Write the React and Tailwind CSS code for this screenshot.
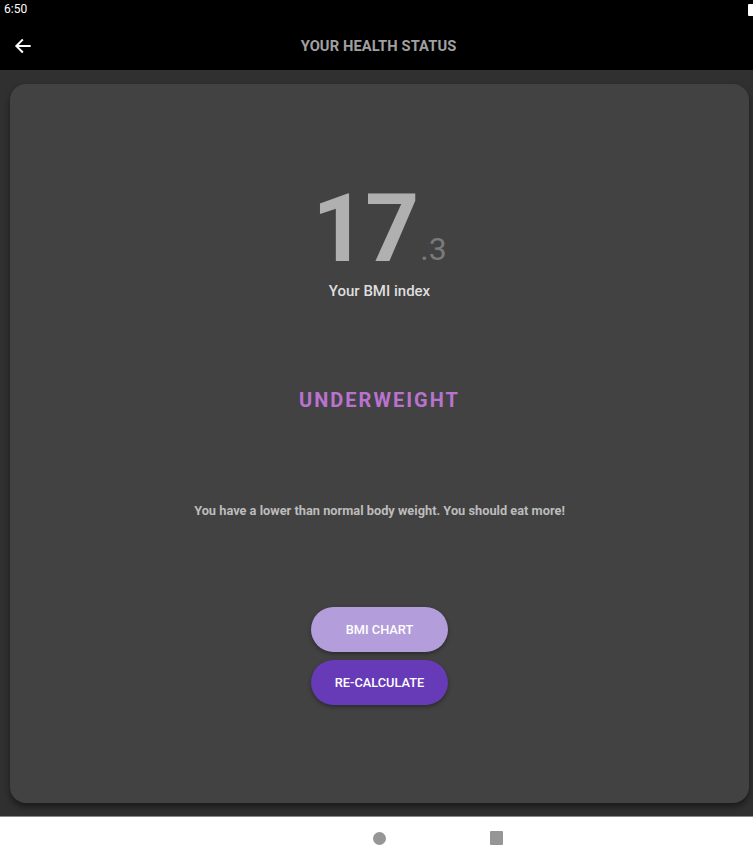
import React from "react";

export default function App() {
  return (
    <div className="w-[753px] h-[855px] flex flex-col bg-[#303030] font-['Roboto',sans-serif] overflow-hidden">
      {/* Status bar */}
      <div className="h-[22px] bg-black flex items-start justify-between pl-[4px]">
        <span className="text-white text-[12px] leading-[18px]">6:50</span>
        <div className="w-[5px] h-[12px] bg-white mt-[4px] rounded-l-[1px]" />
      </div>

      {/* App bar */}
      <div className="h-[48px] bg-black relative flex items-center justify-center">
        <button className="absolute left-[11px] top-[12px] w-[24px] h-[24px] flex items-center justify-center">
          <svg width="20" height="20" viewBox="0 0 24 24" fill="none" stroke="white" strokeWidth="2.4" strokeLinecap="square">
            <path d="M20 12H5" />
            <path d="M11 5l-7 7 7 7" strokeLinejoin="miter" />
          </svg>
        </button>
        <h1 className="ml-[4px] text-[#a0a0a0] text-[14.7px] font-bold tracking-[0.1px]">
          YOUR HEALTH STATUS
        </h1>
      </div>

      {/* Body */}
      <div className="flex-1 pl-[10px] pr-[4px] pt-[14px] pb-[13px] flex">
        <div className="flex-1 bg-[#424242] rounded-[16px] shadow-[0_4px_6px_rgba(0,0,0,0.45)] flex flex-col items-center">
          <div className="mt-[106px] flex items-end">
            <span className="text-[#b0b0b0] text-[94px] font-bold leading-[78px] tracking-[-1px]">17</span>
            <span className="text-[#7a7a7a] text-[32px] leading-[28px] ml-[2px] mb-[5px]">.3</span>
          </div>
          <p className="mt-[12px] text-[#dedede] text-[15px] font-medium">Your BMI index</p>

          <p className="mt-[82px] text-[#ba72d0] text-[20px] font-bold tracking-[2px]">UNDERWEIGHT</p>

          <p className="mt-[86px] text-[#bcbcbc] text-[12.8px] font-bold">
            You have a lower than normal body weight. You should eat more!
          </p>

          <div className="mt-[87px] flex flex-col items-center gap-[8px]">
            <button className="w-[137px] h-[45px] rounded-full bg-[#b39ddb] text-white text-[12.8px] font-medium shadow-[0_2px_4px_rgba(0,0,0,0.35)]">
              BMI CHART
            </button>
            <button className="w-[137px] h-[45px] rounded-full bg-[#673ab7] text-white text-[12.8px] font-medium shadow-[0_2px_4px_rgba(0,0,0,0.35)]">
              RE-CALCULATE
            </button>
          </div>
        </div>
      </div>

      {/* Nav bar */}
      <div className="h-[39px] bg-white border-t border-[#8a8a8a] relative">
        <div className="absolute left-[373px] top-[15px] w-[13px] h-[13px] rounded-full bg-[#969696]" />
        <div className="absolute left-[490px] top-[14px] w-[13px] h-[14px] rounded-[1px] bg-[#969696]" />
      </div>
    </div>
  );
}
